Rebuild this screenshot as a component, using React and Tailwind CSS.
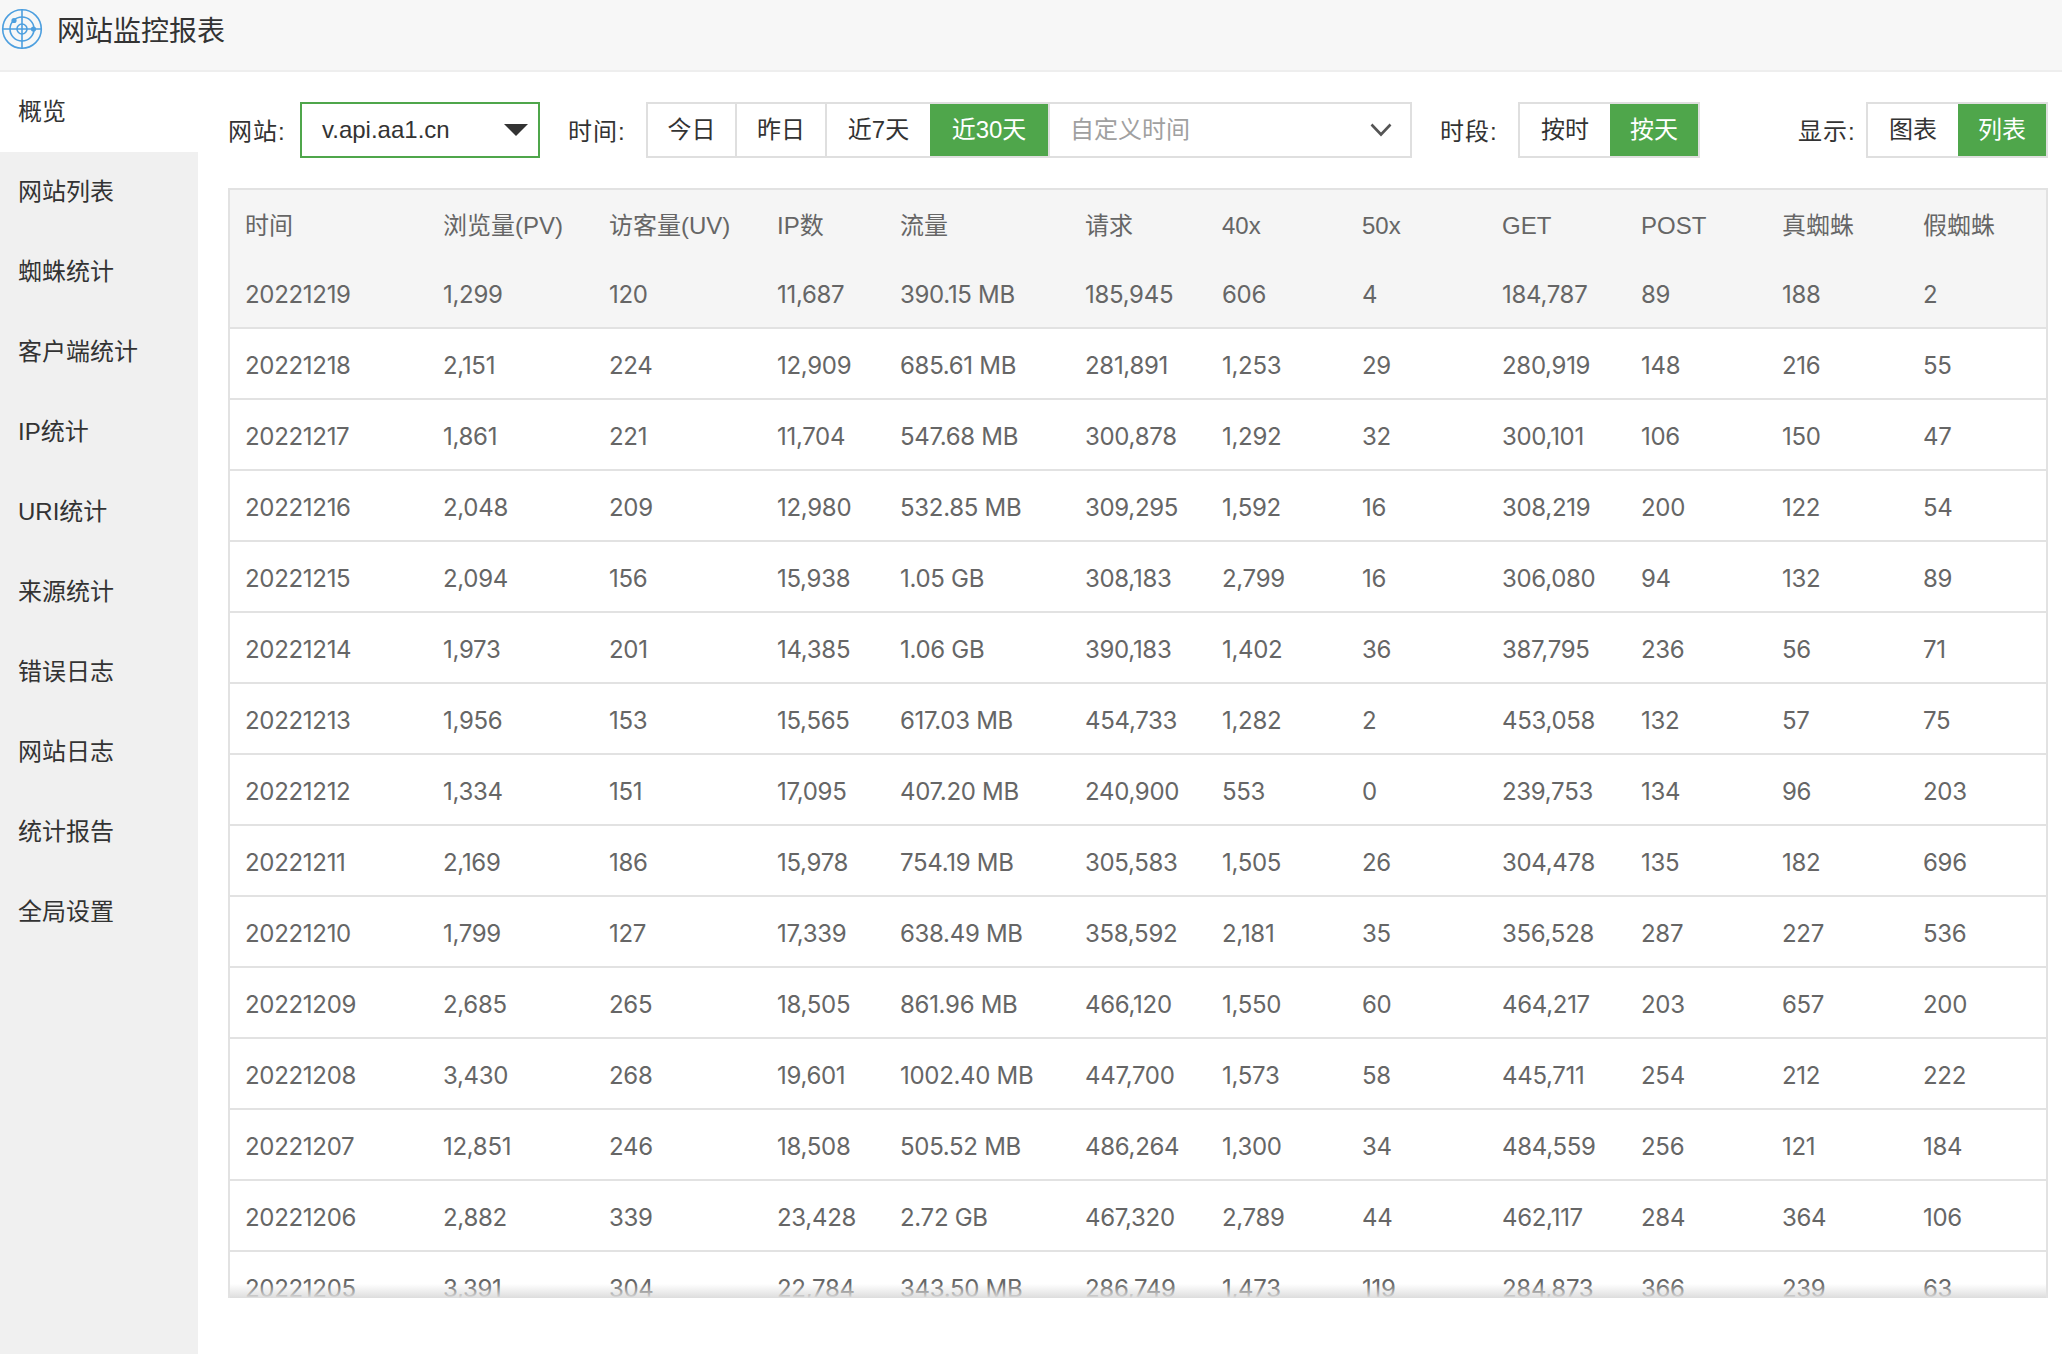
const columns = [
  ["时间", "w-[198px]"], ["浏览量(PV)", "w-[166px]"], ["访客量(UV)", "w-[168px]"], ["IP数", "w-[123px]"],
  ["流量", "w-[185px]"], ["请求", "w-[137px]"], ["40x", "w-[140px]"], ["50x", "w-[140px]"],
  ["GET", "w-[139px]"], ["POST", "w-[141px]"], ["真蜘蛛", "w-[141px]"], ["假蜘蛛", "w-[138px]"],
];
const rows = [
  ["20221219","1,299","120","11,687","390.15 MB","185,945","606","4","184,787","89","188","2"],
  ["20221218","2,151","224","12,909","685.61 MB","281,891","1,253","29","280,919","148","216","55"],
  ["20221217","1,861","221","11,704","547.68 MB","300,878","1,292","32","300,101","106","150","47"],
  ["20221216","2,048","209","12,980","532.85 MB","309,295","1,592","16","308,219","200","122","54"],
  ["20221215","2,094","156","15,938","1.05 GB","308,183","2,799","16","306,080","94","132","89"],
  ["20221214","1,973","201","14,385","1.06 GB","390,183","1,402","36","387,795","236","56","71"],
  ["20221213","1,956","153","15,565","617.03 MB","454,733","1,282","2","453,058","132","57","75"],
  ["20221212","1,334","151","17,095","407.20 MB","240,900","553","0","239,753","134","96","203"],
  ["20221211","2,169","186","15,978","754.19 MB","305,583","1,505","26","304,478","135","182","696"],
  ["20221210","1,799","127","17,339","638.49 MB","358,592","2,181","35","356,528","287","227","536"],
  ["20221209","2,685","265","18,505","861.96 MB","466,120","1,550","60","464,217","203","657","200"],
  ["20221208","3,430","268","19,601","1002.40 MB","447,700","1,573","58","445,711","254","212","222"],
  ["20221207","12,851","246","18,508","505.52 MB","486,264","1,300","34","484,559","256","121","184"],
  ["20221206","2,882","339","23,428","2.72 GB","467,320","2,789","44","462,117","284","364","106"],
  ["20221205","3,391","304","22,784","343.50 MB","286,749","1,473","119","284,873","366","239","63"],
];
const menu = ["概览","网站列表","蜘蛛统计","客户端统计","IP统计","URI统计","来源统计","错误日志","网站日志","统计报告","全局设置"];

function Logo() {
  return (
    <svg width="44" height="44" viewBox="0 0 44 44" fill="none" stroke="#4d9fdf" strokeWidth="1.6" className="mb-[6px] shrink-0">
      <circle cx="22" cy="22" r="19.3" />
      <circle cx="22" cy="22" r="12" />
      <circle cx="22" cy="22" r="5" />
      <path d="M22 2.5V41.5M2.5 22H41.5" />
      <circle cx="14" cy="13.5" r="2.6" fill="#4d9fdf" stroke="none" />
      <circle cx="33.5" cy="22" r="2.6" fill="#4d9fdf" stroke="none" />
    </svg>
  );
}

function Group({ items, active }) {
  return (
    <div className="flex h-[56px] border-2 border-[#dfdfdf] bg-white">
      {items.map(([label, w], i) => (
        <div
          key={label}
          className={
            "flex items-center justify-center " + w + " " +
            (i === active ? "bg-[#4fa64b] text-white" : "text-[#333] ") +
            (i < items.length - 1 && i !== active && i + 1 !== active ? " border-r-2 border-[#dfdfdf]" : "")
          }
        >
          {label}
        </div>
      ))}
    </div>
  );
}

export default function App() {
  return (
    <div className="flex h-screen w-full flex-col overflow-hidden bg-white text-[24px] text-[#333] font-['Liberation_Sans','Noto_Sans_CJK_SC',sans-serif]">
      <header className="flex h-[72px] shrink-0 items-center border-b-2 border-[#eeeeee] bg-[#f7f7f7] pb-[6px]">
        <Logo />
        <span className="ml-[13px] text-[28px] text-[#333]">网站监控报表</span>
      </header>
      <div className="flex min-h-0 flex-1">
        <aside className="w-[198px] shrink-0 bg-[#f0f0f0]">
          {menu.map((m, i) => (
            <div key={m} className={"flex h-[80px] items-center pl-[18px] text-[#333] " + (i === 0 ? "bg-white" : "")}>{m}</div>
          ))}
        </aside>
        <main className="min-w-0 flex-1 pl-[30px] pr-[14px]">
          <div className="mt-[30px] flex h-[56px] items-center">
            <span className="w-[72px] pt-[3px] tracking-[1px]">网站:</span>
            <div className="relative flex h-[56px] w-[240px] items-center border-2 border-[#4fa64b] pl-[20px]">
              v.api.aa1.cn
              <svg width="24" height="12" viewBox="0 0 24 12" className="absolute right-[10px] top-[20px]">
                <path d="M0 0H24L12 12Z" fill="#333" />
              </svg>
            </div>
            <span className="ml-[28px] w-[78px] pt-[3px] tracking-[1px]">时间:</span>
            <Group items={[["今日","w-[89px]"],["昨日","w-[90px]"],["近7天","w-[103px]"],["近30天","w-[118px]"]]} active={3} />
            <div className="-ml-[2px] flex h-[56px] w-[364px] items-center border-y-2 border-r-2 border-[#dfdfdf] pl-[22px] pr-[18px] text-[#a0a0a0]">
              <span className="flex-1">自定义时间</span>
              <svg width="22" height="14" viewBox="0 0 22 14" fill="none" stroke="#555" strokeWidth="2.6">
                <path d="M1.5 1.5L11 11.5L20.5 1.5" />
              </svg>
            </div>
            <span className="ml-[28px] w-[78px] pt-[3px] tracking-[1px]">时段:</span>
            <Group items={[["按时","w-[90px]"],["按天","w-[88px]"]]} active={1} />
            <span className="ml-auto w-[68px] pt-[3px] tracking-[1px]">显示:</span>
            <Group items={[["图表","w-[90px]"],["列表","w-[88px]"]]} active={1} />
          </div>
          <div className="relative mt-[30px] h-[1110px] overflow-hidden border-x-2 border-t-2 border-[#e2e2e2]">
            <table className="w-full table-fixed border-separate border-spacing-0 text-left text-[#666]">
              <thead>
                <tr className="h-[68px] bg-[#f5f5f5]">
                  {columns.map(([c, w]) => (
                    <th key={c} className={"whitespace-nowrap pl-[15px] pt-[3px] font-normal " + w}>{c}</th>
                  ))}
                </tr>
              </thead>
              <tbody>
                {rows.map((r, i) => (
                  <tr key={r[0]} className={"h-[71px] " + (i === 0 ? "bg-[#f5f5f5]" : "")}>
                    {r.map((v, j) => (
                      <td key={j} className="whitespace-nowrap border-b-2 border-[#e2e2e2] pl-[15px] pt-[5px] font-['Inter',sans-serif] text-[24px] tracking-[-0.3px]">{v}</td>
                    ))}
                  </tr>
                ))}
              </tbody>
            </table>
            <div className="absolute inset-x-0 bottom-0 h-[14px] bg-gradient-to-b from-[#ffffff00] to-[#dddddd]" />
          </div>
        </main>
      </div>
    </div>
  );
}
